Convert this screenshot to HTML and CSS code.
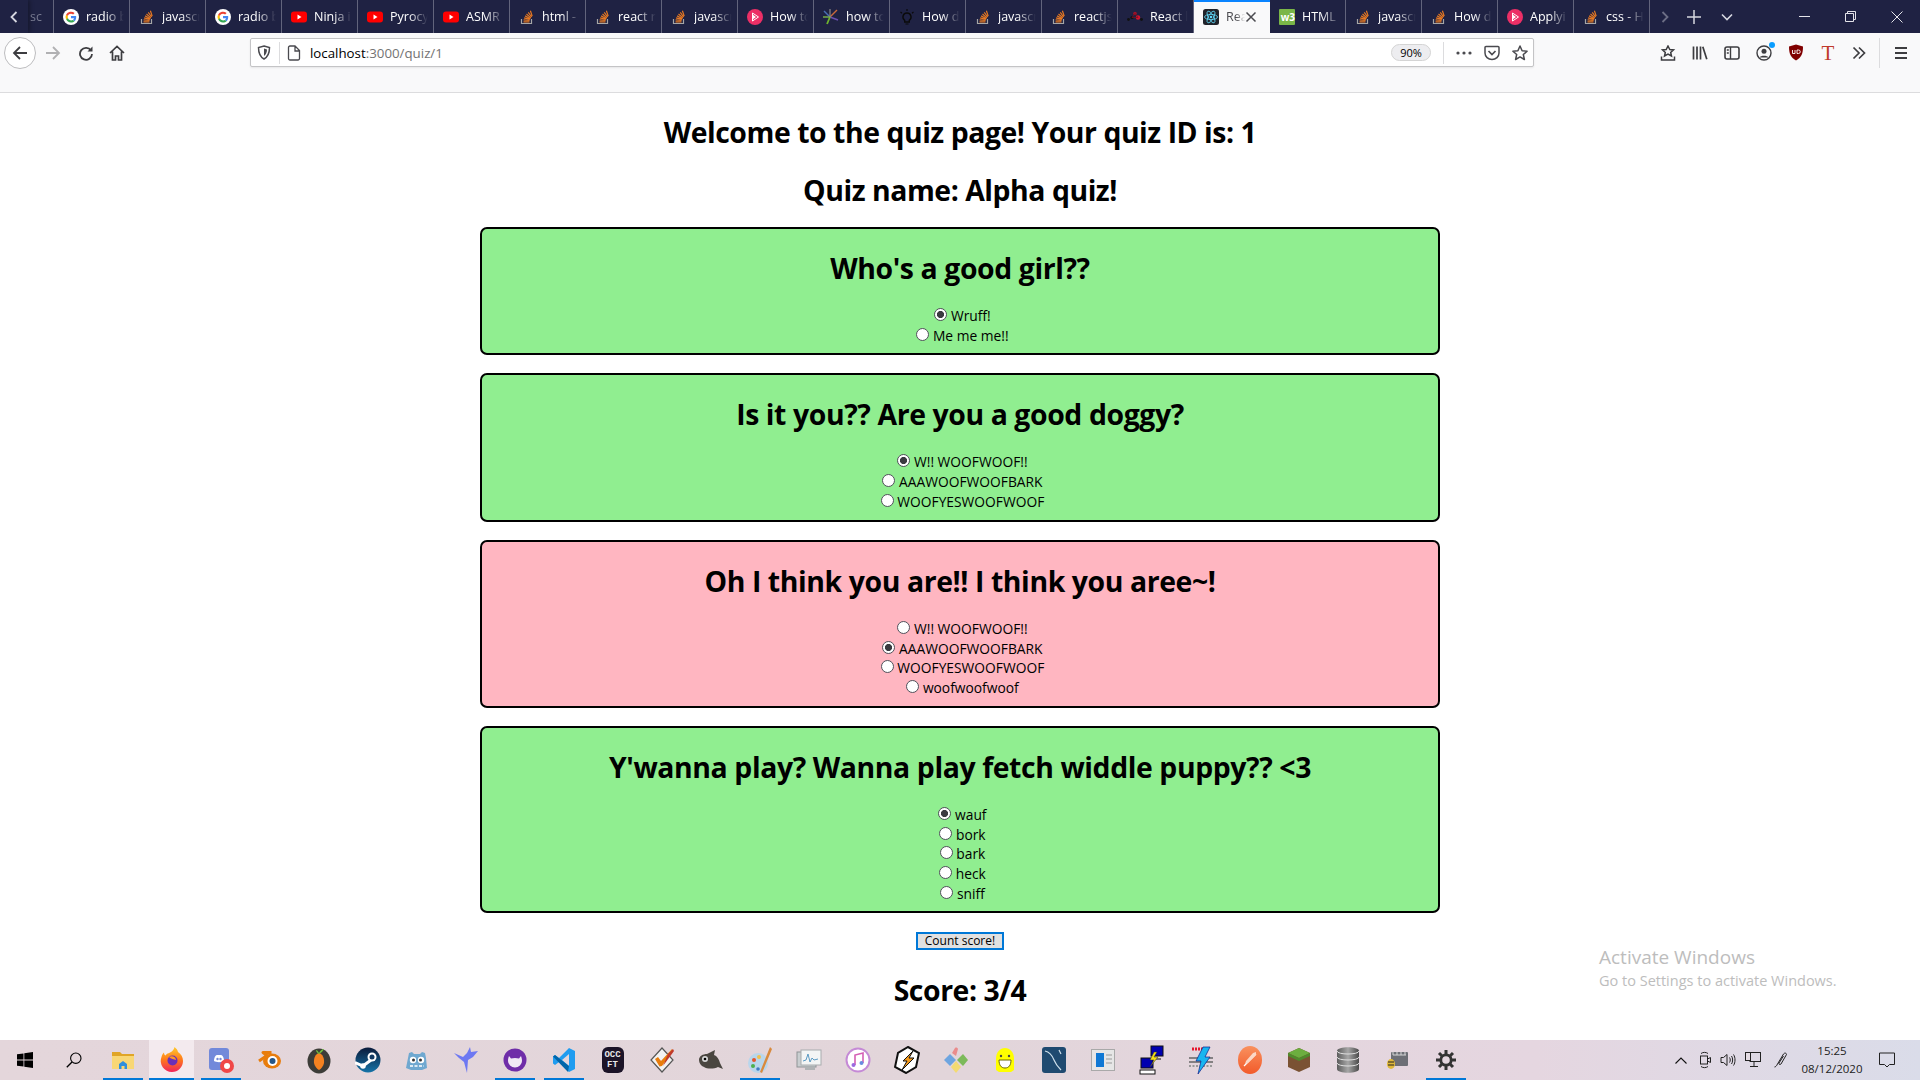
FILE: index.html
```html
<!DOCTYPE html>
<html lang="en">
<head>
<meta charset="UTF-8">
<title>React App</title>
<link rel="stylesheet" href="styles.css">
</head>
<body>

<!-- icon sheet -->
<svg class="icon-sheet" xmlns="http://www.w3.org/2000/svg">
    <symbol id="fav-google" viewBox="0 0 16 16">
        <circle cx="8" cy="8" r="8" fill="#fff"/>
        <path d="M13.2 8.2c0-.4 0-.8-.1-1.2H8v2.2h3a2.6 2.6 0 0 1-1.1 1.7l1.7 1.3c1-.9 1.6-2.3 1.6-4z" fill="#4285f4"/>
        <path d="M8 13.5c1.5 0 2.7-.5 3.6-1.3l-1.7-1.3c-.5.3-1.1.5-1.9.5-1.4 0-2.7-1-3.1-2.3L3.1 10A5.5 5.5 0 0 0 8 13.5z" fill="#34a853"/>
        <path d="M4.900 9.100a3.300 3.300 0 0 1 0-2.200L3.100 5.600a5.500 5.500 0 0 0 0 4.800z" fill="#fbbc05"/>
        <path d="M8 4.700c.8 0 1.500.3 2.100.8l1.500-1.500A5.500 5.500 0 0 0 3.100 5.600l1.800 1.300C5.300 5.600 6.600 4.700 8 4.700z" fill="#ea4335"/>
    </symbol>
    <symbol id="fav-so" viewBox="0 0 16 16">
        <path d="M2.500 10v4.500h10V10" fill="none" stroke="#a6a6a6" stroke-width="1.200"/>
        <path d="M4.500 12.800h6M4.600 10.900l6 .6M5.100 8.900l5.800 1.500M6.100 6.900l5.300 2.800M7.500 5l4.400 3.900M9.300 3.300l3.300 4.700M11.400 1.800l1.800 5.300" fill="none" stroke="#e87922" stroke-width="1.200"/>
    </symbol>
    <symbol id="fav-yt" viewBox="0 0 16 16">
        <rect x="0" y="2.500" width="16" height="11" rx="3" fill="#f00"/>
        <path d="M6.500 5.500v5l4-2.500z" fill="#fff"/>
    </symbol>
    <symbol id="fav-pink" viewBox="0 0 16 16">
        <circle cx="8" cy="8" r="8" fill="#ec2f66"/>
        <path d="M5.500 4v8l6-4z" fill="none" stroke="#fff" stroke-width="1"/>
        <path d="M5.500 5.500v5l3.500-2.500z" fill="#fff"/>
    </symbol>
    <symbol id="fav-spark" viewBox="0 0 16 16">
        <path d="M7 8L1 2" stroke="#4a6fb5" stroke-width="1.400"/>
        <path d="M7 8l7-7" stroke="#c9693a" stroke-width="1.400"/>
        <path d="M7 8l8 3" stroke="#6a4fb0" stroke-width="1.400"/>
        <path d="M7 8l-3 7" stroke="#6fb52e" stroke-width="1.800"/>
        <path d="M7 8H0" stroke="#7ab648" stroke-width="1.400"/>
        <path d="M7 8V0" stroke="#888" stroke-width="1.200"/>
    </symbol>
    <symbol id="fav-bulb" viewBox="0 0 16 16">
        <path d="M8 4a4 4 0 0 0-2.300 7.300V13h4.600v-1.700A4 4 0 0 0 8 4z" fill="none" stroke="#0b0b0b" stroke-width="1.400"/>
        <path d="M6.500 15h3M8 0v2M1.500 3l1.500 1.300M14.500 3L13 4.300" stroke="#0b0b0b" stroke-width="1.200"/>
    </symbol>
    <symbol id="fav-dots" viewBox="0 0 16 16">
        <circle cx="8" cy="4.500" r="1.800" fill="#a3122a"/>
        <circle cx="11" cy="8.500" r="2.200" fill="#d4122e"/>
        <circle cx="5" cy="8.500" r="1.600" fill="#111"/>
        <circle cx="1.500" cy="10.500" r="1.400" fill="#111"/>
        <circle cx="14.500" cy="10.500" r="1.400" fill="#111"/>
        <path d="M8 4.500l3 4M8 4.500l-3 4M5 8.500h6" stroke="#7a1020" stroke-width=".8"/>
    </symbol>
    <symbol id="fav-react" viewBox="0 0 16 16">
        <rect width="16" height="16" rx="2.500" fill="#20232a"/>
        <g fill="none" stroke="#61dafb" stroke-width=".8">
            <ellipse cx="8" cy="8" rx="6.500" ry="2.600"/>
            <ellipse cx="8" cy="8" rx="6.500" ry="2.600" transform="rotate(60 8 8)"/>
            <ellipse cx="8" cy="8" rx="6.500" ry="2.600" transform="rotate(120 8 8)"/>
        </g>
        <circle cx="8" cy="8" r="1.300" fill="#61dafb"/>
    </symbol>
</svg>

<!-- tab strip -->
<header class="tabstrip">
    <span class="tab-scroll">
        <svg width="10" height="14" viewBox="0 0 10 14"><path d="M7.500 2L2.500 7l5 5" fill="none" stroke="#d6d7e0" stroke-width="1.800"/></svg>
    </span>
    <div class="tab tab-cut"><span class="tab-label">sc</span></div>
    <div class="tab"><svg class="fav"><use href="#fav-google"/></svg><span class="tab-label">radio b</span></div>
    <div class="tab"><svg class="fav"><use href="#fav-so"/></svg><span class="tab-label">javascr</span></div>
    <div class="tab"><svg class="fav"><use href="#fav-google"/></svg><span class="tab-label">radio b</span></div>
    <div class="tab"><svg class="fav"><use href="#fav-yt"/></svg><span class="tab-label">Ninja i</span></div>
    <div class="tab"><svg class="fav"><use href="#fav-yt"/></svg><span class="tab-label">Pyrocy</span></div>
    <div class="tab"><svg class="fav"><use href="#fav-yt"/></svg><span class="tab-label">ASMR</span></div>
    <div class="tab"><svg class="fav"><use href="#fav-so"/></svg><span class="tab-label">html -</span></div>
    <div class="tab"><svg class="fav"><use href="#fav-so"/></svg><span class="tab-label">react r</span></div>
    <div class="tab"><svg class="fav"><use href="#fav-so"/></svg><span class="tab-label">javascr</span></div>
    <div class="tab"><svg class="fav"><use href="#fav-pink"/></svg><span class="tab-label">How to</span></div>
    <div class="tab"><svg class="fav"><use href="#fav-spark"/></svg><span class="tab-label">how to</span></div>
    <div class="tab"><svg class="fav"><use href="#fav-bulb"/></svg><span class="tab-label">How d</span></div>
    <div class="tab"><svg class="fav"><use href="#fav-so"/></svg><span class="tab-label">javascr</span></div>
    <div class="tab"><svg class="fav"><use href="#fav-so"/></svg><span class="tab-label">reactjs</span></div>
    <div class="tab"><svg class="fav"><use href="#fav-dots"/></svg><span class="tab-label">React l</span></div>
    <div class="tab tab-active">
        <svg class="fav"><use href="#fav-react"/></svg><span class="tab-label">Rea</span>
        <svg class="tab-close" width="12" height="12" viewBox="0 0 12 12"><path d="M1.500 1.500l9 9M10.500 1.500l-9 9" stroke="#4a4a4f" stroke-width="1.500"/></svg>
    </div>
    <div class="tab"><span class="fav fav-w3">w3</span><span class="tab-label">HTML</span></div>
    <div class="tab"><svg class="fav"><use href="#fav-so"/></svg><span class="tab-label">javascr</span></div>
    <div class="tab"><svg class="fav"><use href="#fav-so"/></svg><span class="tab-label">How d</span></div>
    <div class="tab"><svg class="fav"><use href="#fav-pink"/></svg><span class="tab-label">Applyi</span></div>
    <div class="tab"><svg class="fav"><use href="#fav-so"/></svg><span class="tab-label">css - H</span></div>
    <div class="strip-btns">
        <svg width="10" height="14" viewBox="0 0 10 14"><path d="M2.500 2l5 5-5 5" fill="none" stroke="#6c6e85" stroke-width="1.800"/></svg>
        <svg width="14" height="14" viewBox="0 0 14 14"><path d="M7 0v14M0 7h14" stroke="#d6d7e0" stroke-width="1.500"/></svg>
        <svg width="12" height="8" viewBox="0 0 12 8"><path d="M1 1.500l5 5 5-5" fill="none" stroke="#d6d7e0" stroke-width="1.600"/></svg>
    </div>
    <div class="win-btns">
        <svg width="11" height="11" viewBox="0 0 11 11"><path d="M0 5.500h11" stroke="#e4e4ea"/></svg>
        <svg width="11" height="11" viewBox="0 0 11 11"><path d="M.5 2.500h8v8h-8zM2.500 2.500v-2h8v8h-2" fill="none" stroke="#e4e4ea"/></svg>
        <svg width="12" height="12" viewBox="0 0 12 12"><path d="M.5.500l11 11M11.500.500l-11 11" stroke="#e4e4ea"/></svg>
    </div>
</header>

<!-- toolbar -->
<nav class="toolbar">
    <span class="back-btn">
        <svg width="16" height="16" viewBox="0 0 16 16"><path d="M15 8H2M8 2L2 8l6 6" fill="none" stroke="#3d3d40" stroke-width="1.800"/></svg>
    </span>
    <svg class="tool tool-fwd" width="16" height="16" viewBox="0 0 16 16"><path d="M1 8h13M8 2l6 6-6 6" fill="none" stroke="#b1b1b3" stroke-width="1.800"/></svg>
    <svg class="tool tool-reload" width="16" height="16" viewBox="0 0 16 16"><path d="M13 5.500A6 6 0 1 0 14 9" fill="none" stroke="#3d3d40" stroke-width="1.800"/><path d="M14.500 1.500v5h-5z" fill="#3d3d40"/></svg>
    <svg class="tool tool-home" width="16" height="16" viewBox="0 0 16 16"><path d="M1 8l7-6.500L15 8M3.500 6.500V15h3v-4h3v4h3V6.500" fill="none" stroke="#3d3d40" stroke-width="1.700"/></svg>

    <div class="urlbar">
        <svg class="url-shield" width="14" height="15" viewBox="0 0 14 15"><path d="M7 1l5.500 1.500c0 5-1 9-5.500 11.500C2.500 11.500 1.500 7.500 1.500 2.500z" fill="none" stroke="#4a4a4f" stroke-width="1.500"/><path d="M7 3.500v7.500c2-1.500 3-3.500 3-6.500z" fill="#4a4a4f"/></svg>
        <span class="url-sep"></span>
        <svg class="url-page" width="14" height="16" viewBox="0 0 14 16"><path d="M1.500 2.500a1.500 1.500 0 0 1 1.500-1.500h5l4.500 4.500v8a1.500 1.500 0 0 1-1.500 1.500H3a1.500 1.500 0 0 1-1.500-1.500zM8 1v5h4.500" fill="none" stroke="#4a4a4f" stroke-width="1.300"/></svg>
        <span class="url-text">localhost<span class="url-dim">:3000/quiz/1</span></span>
        <span class="url-zoom">90%</span>
        <span class="url-sep url-sep-right"></span>
        <svg class="url-more" width="16" height="4" viewBox="0 0 16 4"><circle cx="2" cy="2" r="1.600" fill="#4a4a4f"/><circle cx="8" cy="2" r="1.600" fill="#4a4a4f"/><circle cx="14" cy="2" r="1.600" fill="#4a4a4f"/></svg>
        <svg width="16" height="16" viewBox="0 0 16 16"><path d="M1 2.500a1 1 0 0 1 1-1h12a1 1 0 0 1 1 1V8a7 6.500 0 0 1-14 0z" fill="none" stroke="#4a4a4f" stroke-width="1.500"/><path d="M4.500 6L8 9.500 11.500 6" fill="none" stroke="#4a4a4f" stroke-width="1.700"/></svg>
        <svg width="16" height="16" viewBox="0 0 16 16"><path d="M8 1l2.100 4.700 5 .5-3.800 3.300 1.100 5L8 11.900l-4.400 2.600 1.100-5L.9 6.200l5-.5z" fill="none" stroke="#4a4a4f" stroke-width="1.500" stroke-linejoin="round"/></svg>
    </div>

    <div class="tool-right">
        <svg width="16" height="16" viewBox="0 0 16 16"><path d="M8 1l1.800 3.500 3.700.4-2.800 2.500.8 3.600L8 9.200l-3.500 1.800.8-3.600-2.800-2.500 3.700-.4z" fill="none" stroke="#3d3d40" stroke-width="1.500"/><path d="M1.500 11.500v3.500h13v-3.500" fill="none" stroke="#3d3d40" stroke-width="1.500"/></svg>
        <svg width="16" height="16" viewBox="0 0 16 16"><path d="M1.500 1.500v13M5 1.500v13M8.500 1.500v13M10.800 1.800l4 12.500" stroke="#3d3d40" stroke-width="1.700"/></svg>
        <svg width="16" height="16" viewBox="0 0 16 16"><rect x="1" y="2" width="14" height="12" rx="2" fill="none" stroke="#3d3d40" stroke-width="1.600"/><path d="M6.500 2v12M2.800 5h2M2.800 8h2" stroke="#3d3d40" stroke-width="1.400"/></svg>
        <span class="acct">
            <svg width="16" height="16" viewBox="0 0 16 16"><circle cx="8" cy="8" r="7" fill="none" stroke="#3d3d40" stroke-width="1.400"/><circle cx="8" cy="6.300" r="2.500" fill="#3d3d40"/><path d="M3.500 12.500c1-2.500 8-2.500 9 0" fill="#3d3d40"/></svg>
            <span class="acct-dot"></span>
        </span>
        <svg width="16" height="17" viewBox="0 0 16 17"><path d="M8 .5l7 2c0 7-1.500 11-7 14-5.500-3-7-7-7-14z" fill="#800000"/><path d="M4.500 6v3.500h2.500V6M9 6v3.500h1.500a1.700 1.700 0 0 0 0-3.500z" fill="none" stroke="#fff" stroke-width=".9"/></svg>
        <span class="ext-t">T</span>
        <svg width="14" height="14" viewBox="0 0 14 14"><path d="M1.500 1.500L7 7l-5.500 5.500M7 1.500L12.500 7 7 12.500" fill="none" stroke="#3d3d40" stroke-width="1.700"/></svg>
        <span class="tool-sep"></span>
        <svg width="14" height="14" viewBox="0 0 14 14"><path d="M1 2h12M1 7h12M1 12h12" stroke="#3d3d40" stroke-width="1.800"/></svg>
    </div>
</nav>

<!-- the quiz page itself -->
<main class="quiz-page">
    <h1>Welcome to the quiz page! Your quiz ID is: 1</h1>
    <h1>Quiz name: Alpha quiz!</h1>

    <section class="question certa">
        <h2>Who's a good girl??</h2>
        <label class="opcao"><input type="radio" name="q1" checked> Wruff!</label>
        <label class="opcao"><input type="radio" name="q1"> Me me me!!</label>
    </section>

    <section class="question certa">
        <h2>Is it you?? Are you a good doggy?</h2>
        <label class="opcao"><input type="radio" name="q2" checked> W!! WOOFWOOF!!</label>
        <label class="opcao"><input type="radio" name="q2"> AAAWOOFWOOFBARK</label>
        <label class="opcao"><input type="radio" name="q2"> WOOFYESWOOFWOOF</label>
    </section>

    <section class="question errada">
        <h2>Oh I think you are!! I think you aree~!</h2>
        <label class="opcao"><input type="radio" name="q3"> W!! WOOFWOOF!!</label>
        <label class="opcao"><input type="radio" name="q3" checked> AAAWOOFWOOFBARK</label>
        <label class="opcao"><input type="radio" name="q3"> WOOFYESWOOFWOOF</label>
        <label class="opcao"><input type="radio" name="q3"> woofwoofwoof</label>
    </section>

    <section class="question certa">
        <h2>Y'wanna play? Wanna play fetch widdle puppy?? &lt;3</h2>
        <label class="opcao"><input type="radio" name="q4" checked> wauf</label>
        <label class="opcao"><input type="radio" name="q4"> bork</label>
        <label class="opcao"><input type="radio" name="q4"> bark</label>
        <label class="opcao"><input type="radio" name="q4"> heck</label>
        <label class="opcao"><input type="radio" name="q4"> sniff</label>
    </section>

    <button type="button" class="count-btn">Count score!</button>
    <h1 class="score">Score: 3/4</h1>

    <div class="activate">
        <div class="activate-title">Activate Windows</div>
        <div>Go to Settings to activate Windows.</div>
    </div>
</main>

<!-- windows taskbar -->
<footer class="taskbar">
    <span class="task">
        <svg width="16" height="16" viewBox="0 0 16 16"><path d="M0 2.300l6.500-.9v6.200H0zM7.300 1.300L16 0v7.600H7.300zM0 8.400h6.500v6.200L0 13.700zM7.300 8.400H16V16l-8.700-1.200z" fill="#000"/></svg>
    </span>
    <span class="task">
        <svg width="16" height="16" viewBox="0 0 16 16"><circle cx="9.800" cy="6.200" r="5.200" fill="none" stroke="#000" stroke-width="1.100"/><path d="M6 10L.8 15.300" stroke="#000" stroke-width="1.300"/></svg>
    </span>
    <span class="task task-on">
        <svg width="24" height="24" viewBox="0 0 24 24"><path d="M1 4h8l2 2h12v5H1z" fill="#e0a526"/><path d="M1 8h22v13H1z" fill="#f8d775"/><path d="M8 21v-5l4-3 4 3v5h-2.500v-3h-3v3z" fill="#2f8fdc"/></svg>
    </span>
    <span class="task task-on task-active">
        <svg width="24" height="26" viewBox="0 0 24 26"><defs><linearGradient id="ff" x1="0" y1="0" x2="0" y2="1"><stop offset="0" stop-color="#ffcb2e"/><stop offset=".5" stop-color="#ff7a1a"/><stop offset="1" stop-color="#f0245a"/></linearGradient></defs><path d="M12 25A11 11 0 0 1 1.500 10c.5-2 1.500-4 2.500-4.500 0 1.500.5 2.500 1.500 3C7 6 10 6 11 5c1.500-1 3-2.500 3.500-5 2 1.500 3 3 3.500 5 3 2 5 5 5 9a11 11 0 0 1-11 11z" fill="url(#ff)"/><circle cx="12.500" cy="13.500" r="5" fill="#6b2fb8"/><path d="M9 10c3-2 7 0 7 3-2-1-5-1-7-3z" fill="#ff9a1f"/></svg>
    </span>
    <span class="task task-divider task-on">
        <svg width="28" height="28" viewBox="0 0 28 28"><rect x="2" y="2" width="20" height="22" rx="3" fill="#7289da"/><path d="M7 15c0-4 2-6 3-6h4c1 0 3 2 3 6-2 1.500-8 1.500-10 0z" fill="#fff"/><circle cx="10.500" cy="13" r="1.200" fill="#7289da"/><circle cx="13.500" cy="13" r="1.200" fill="#7289da"/><circle cx="20" cy="20" r="7" fill="#f04747"/><circle cx="20" cy="20" r="3" fill="#fff"/></svg>
    </span>
    <span class="task">
        <svg width="24" height="24" viewBox="0 0 24 24"><path d="M1 13l8-5.500L5 4.500h8.500" fill="none" stroke="#e87d0d" stroke-width="3" stroke-linejoin="round"/><ellipse cx="14" cy="13" rx="9" ry="7.500" fill="#e87d0d"/><circle cx="14.500" cy="13" r="5" fill="#fff"/><circle cx="14.500" cy="13" r="3" fill="#265787"/></svg>
    </span>
    <span class="task">
        <svg width="24" height="28" viewBox="0 0 24 28"><ellipse cx="12" cy="15" rx="11.500" ry="12.500" fill="#3c3c38"/><path d="M12 7c4 1 5.500 6 5 10-.5 3-3 6-5 7-2-1-4.500-4-5-7-.5-4 1-9 5-10z" fill="#f58220"/><path d="M9 4c1 0 2 1 3 3 1-2 3-4 5-4-1 2-3 4-5 5-1-.5-3-2-3-4z" fill="#6fbf3f"/></svg>
    </span>
    <span class="task">
        <svg width="26" height="26" viewBox="0 0 26 26"><defs><linearGradient id="st" x1="0" y1="0" x2="0" y2="1"><stop offset="0" stop-color="#0a1a3a"/><stop offset="1" stop-color="#1574a8"/></linearGradient></defs><circle cx="13" cy="13" r="12.500" fill="url(#st)"/><path d="M0 15.500l8 3.500 8-6" fill="none" stroke="#fff" stroke-width="3"/><circle cx="17" cy="10" r="4.500" fill="#fff"/><circle cx="17" cy="10" r="2.500" fill="#123a63"/><circle cx="8" cy="19" r="2.800" fill="#fff"/></svg>
    </span>
    <span class="task">
        <svg width="24" height="24" viewBox="0 0 24 24"><path d="M3 10l1-5 3-1 2 2h6l2-2 3 1 1 5 1 10-5 2H6l-5-2z" fill="#6fa8d0"/><circle cx="8" cy="12" r="3.200" fill="#fff"/><circle cx="16" cy="12" r="3.200" fill="#fff"/><circle cx="8.500" cy="12" r="1.500" fill="#333"/><circle cx="15.500" cy="12" r="1.500" fill="#333"/><path d="M5 18h14" stroke="#fff" stroke-width="1.500" stroke-dasharray="3 1.500"/></svg>
    </span>
    <span class="task">
        <svg width="26" height="28" viewBox="0 0 26 28"><path d="M1 7l9 4 4-4 3-6 1 5 7-1-5 6-5 3-1 13-3-11-5-4z" fill="#6d78f2"/></svg>
    </span>
    <span class="task task-on">
        <svg width="24" height="24" viewBox="0 0 24 24"><circle cx="12" cy="12" r="11.500" fill="#6f2da8"/><path d="M6 8l2 2.500c2.500-.7 5.500-.7 8 0L18 8c.8 2 1 3.500 1 5a7 6.500 0 0 1-14 0c0-1.500.2-3 1-5z" fill="#f0e8f5"/></svg>
    </span>
    <span class="task task-on">
        <svg width="24" height="26" viewBox="0 0 24 26"><path d="M17 1l6 3v18l-6 3L7 15l-4 3-2-1.500V9.500L3 8l4 3z" fill="#1f9cf0"/><path d="M17 7L10 13l7 6z" fill="#e4d6db"/><path d="M1 9.500L3 8l14 11-1 6z" fill="#0065a9"/></svg>
    </span>
    <span class="task">
        <span class="occt">OCC<br>FT</span>
    </span>
    <span class="task">
        <svg width="26" height="28" viewBox="0 0 26 28"><path d="M13 2l11 12-11 12L2 14z" fill="#f2f2f2" stroke="#555" stroke-width="1.200"/><path d="M6 13l3-2 3 4L23 3l1 2-11 15-2.500.5z" fill="#e87d0d"/><path d="M19 8l5-5 1 2-11 15z" fill="#c0392b"/></svg>
    </span>
    <span class="task">
        <svg width="26" height="22" viewBox="0 0 26 22"><path d="M1 11c0-4 4-6 8-6l8-4-1 5c3 1 5 4 6 8l3 6-5-2c-4 2-11 2-14 0-3-1-5-4-5-7z" fill="#4a4640"/><circle cx="7" cy="10" r="3" fill="#d8d8d8"/><circle cx="7" cy="10" r="1.300" fill="#000"/></svg>
    </span>
    <span class="task task-on">
        <svg width="26" height="28" viewBox="0 0 26 28"><ellipse cx="11" cy="17" rx="10" ry="10" fill="#b9d6ec"/><circle cx="7" cy="14" r="2" fill="#e4572e"/><circle cx="12" cy="11" r="2" fill="#f2c14e"/><circle cx="6" cy="20" r="2" fill="#4caf50"/><circle cx="11" cy="23" r="1.800" fill="#3f7cc4"/><path d="M23 1l2 2-10 24-2-1z" fill="#d98a3d"/></svg>
    </span>
    <span class="task">
        <svg width="26" height="24" viewBox="0 0 26 24"><rect x="1" y="4" width="19" height="15" fill="#c9ced0" stroke="#8f9496"/><rect x="5" y="2" width="20" height="15" fill="#f3f5f5" stroke="#a8acae"/><path d="M7 13l3-1 2-6 2 8 2-4 2 2 4-1" fill="none" stroke="#5b9bc4"/><path d="M9 19h10v3H9z" fill="#b0b3b5"/></svg>
    </span>
    <span class="task">
        <svg width="26" height="26" viewBox="0 0 26 26"><circle cx="13" cy="13" r="11.500" fill="#fff" stroke="#c58ad6" stroke-width="2"/><path d="M10 18V8l8-2v10" fill="none" stroke="#d45fb5" stroke-width="1.600"/><circle cx="8.500" cy="18" r="2" fill="#9a6ae0"/><circle cx="16.500" cy="16" r="2" fill="#6a8de0"/></svg>
    </span>
    <span class="task">
        <svg width="26" height="28" viewBox="0 0 26 28"><path d="M14 1l11 6-3 14-10 6L1 21 4 7z" fill="#fff" stroke="#111" stroke-width="2"/><path d="M19 5L9 15h4l-5 9 12-12h-5z" fill="#f39a1d" stroke="#111"/></svg>
    </span>
    <span class="task">
        <svg width="26" height="28" viewBox="0 0 26 28"><path d="M1 14l6-6 6 6-6 6z" fill="#6ea5e0"/><path d="M14 14l6-6 5 6-5 6z" fill="#7cba5a"/><path d="M8 21l5-6 5 6-5 6z" fill="#f3db72"/><path d="M9 7l3-5c1-1 3 0 3 1l-2 7z" fill="#ea8c8c"/></svg>
    </span>
    <span class="task">
        <svg width="24" height="28" viewBox="0 0 24 28"><path d="M3 13c0-7 4-11 9-11s9 4 9 11v11l-3 2H6l-3-2z" fill="#ffff00"/><path d="M6 14h12c0 5-2 8-6 8s-6-3-6-8z" fill="#fff" stroke="#6a6a00"/><circle cx="8" cy="10" r="1.200" fill="#444"/><circle cx="16" cy="10" r="1.200" fill="#444"/></svg>
    </span>
    <span class="task">
        <svg width="24" height="28" viewBox="0 0 24 28"><rect y="1" width="24" height="26" rx="3" fill="#1f4a70"/><path d="M3 5c5 1 7 4 9 9s4 7 7 10M17 4l2 4" fill="none" stroke="#cfe0ec" stroke-width="1.200"/></svg>
    </span>
    <span class="task">
        <svg width="24" height="22" viewBox="0 0 24 22"><rect x=".5" y=".5" width="23" height="21" fill="#e6e6e6" stroke="#a9a9a9"/><rect x="5" y="4" width="8" height="14" fill="#0f78d4"/><path d="M15 6h6M15 10h6M15 14h6" stroke="#9a9a9a" stroke-width="1.200"/></svg>
    </span>
    <span class="task">
        <svg width="26" height="30" viewBox="0 0 26 30"><rect x="12" y="1" width="12" height="10" fill="#0000b0" stroke="#111"/><path d="M14 11v3h8" fill="none" stroke="#111"/><rect x="2" y="13" width="12" height="10" fill="#0000b0" stroke="#111"/><rect x="1" y="25" width="15" height="4" fill="#fff" stroke="#111"/><path d="M15 7l-4 8h4l-4 7 8-10h-4l3-5z" fill="#f5e014" stroke="#333" stroke-width=".5"/></svg>
    </span>
    <span class="task">
        <svg width="26" height="30" viewBox="0 0 26 30"><path d="M1 13h24M1 17h24" stroke="#666" stroke-width="1.500"/><path d="M1 21h24" stroke="#999" stroke-dasharray="2 1.500" stroke-width="2"/><path d="M4 4h14" stroke="#e6162d" stroke-width="3" stroke-dasharray="2 1"/><path d="M15 2h7l-5 10h5L10 29l3-13H8z" fill="#18b5f0" stroke="#0a1e8c" stroke-width=".7"/></svg>
    </span>
    <span class="task">
        <svg width="24" height="28" viewBox="0 0 24 28"><defs><linearGradient id="or" x1="0" y1="0" x2="0" y2="1"><stop offset="0" stop-color="#f9915e"/><stop offset="1" stop-color="#f25a2a"/></linearGradient></defs><ellipse cx="12" cy="14" rx="12" ry="14" fill="url(#or)"/><path d="M6 20L18 8" stroke="#fff" stroke-width="1.200"/><path d="M15 7l3-1 0 3-8 8-3 1 1-3z" fill="#fbd8c6"/></svg>
    </span>
    <span class="task">
        <svg width="24" height="26" viewBox="0 0 24 26"><path d="M12 1l11 5v14l-11 5L1 20V6z" fill="#7a5233"/><path d="M12 1l11 5-11 5L1 6z" fill="#6cae3f"/><path d="M1 6l11 5v3L1 9zM23 6L12 11v3l11-5z" fill="#4f8a2c"/></svg>
    </span>
    <span class="task">
        <svg width="24" height="28" viewBox="0 0 24 28"><defs><linearGradient id="db" x1="0" y1="0" x2="1" y2="0"><stop offset="0" stop-color="#5c5c5c"/><stop offset=".5" stop-color="#a6a6a6"/><stop offset="1" stop-color="#4a4a4a"/></linearGradient></defs><path d="M1 5c0-5 22-5 22 0v18c0 5-22 5-22 0z" fill="url(#db)"/><path d="M1 5c0 4 22 4 22 0M1 11c0 4 22 4 22 0M1 17c0 4 22 4 22 0" fill="none" stroke="#e0e0e0"/></svg>
    </span>
    <span class="task">
        <svg width="22" height="20" viewBox="0 0 22 20"><rect x="5" y="2" width="17" height="14" rx="1" fill="#6d6f76"/><path d="M7 5h13M7 2v3M11 2v3M15 2v3M19 2v3" stroke="#d6d6d6"/><ellipse cx="5" cy="14" rx="4" ry="5" fill="#e0b93a"/><path d="M2 12h6M2 15h6" stroke="#222" stroke-width="1.200"/></svg>
    </span>
    <span class="task task-on">
        <svg width="20" height="20" viewBox="0 0 20 20"><circle cx="10" cy="10" r="5.200" fill="none" stroke="#333" stroke-width="2.800"/><path d="M10 0v4M10 16v4M0 10h4M16 10h4M3 3l2.800 2.800M14.200 14.200L17 17M17 3l-2.800 2.800M5.800 14.200L3 17" stroke="#333" stroke-width="3"/></svg>
    </span>

    <div class="tray">
        <svg class="tray-up" width="12" height="7" viewBox="0 0 12 7"><path d="M.5 6.500L6 1l5.500 5.500" fill="none" stroke="#111" stroke-width="1.100"/></svg>
        <svg width="12" height="18" viewBox="0 0 12 18"><rect x="1.500" y="5" width="7" height="8" fill="none" stroke="#222"/><path d="M8.500 8l3-1.500v5l-3-1.500M2 2.500c2-1.500 5-1.500 7 0M2 15.500c2 1.500 5 1.500 7 0" fill="none" stroke="#222"/></svg>
        <svg width="16" height="16" viewBox="0 0 16 16"><path d="M1 5.500h2.500L7 2.500v11l-3.500-3H1zM9.500 5.500c1 1.500 1 3.500 0 5M11.500 4c1.500 2 1.500 6 0 8M13.500 2.500c2 3 2 8 0 11" fill="none" stroke="#222"/></svg>
        <svg width="16" height="16" viewBox="0 0 16 16"><rect x="5" y=".5" width="10.500" height="9" fill="none" stroke="#222"/><rect x=".5" y=".5" width="5" height="8" fill="#e4dbe3" stroke="#222"/><path d="M9 10v4M5 14.500h8" fill="none" stroke="#222"/></svg>
        <svg class="tray-pen" width="16" height="16" viewBox="0 0 16 16"><path d="M1.500 15c1 0 2-1 3-3l6-10c1-1.500 3-1 3 .5L8 12c-1 1-2.500.5-2-1l4.500-7" fill="none" stroke="#222"/></svg>
        <div class="clock">
            <div>15:25</div>
            <div>08/12/2020</div>
        </div>
        <svg class="tray-note" width="16" height="16" viewBox="0 0 16 16"><path d="M.5 1h15v11.500h-5L8 15l-2.500-2.500h-5z" fill="none" stroke="#222"/></svg>
    </div>
</footer>

</body>
</html>
```

FILE: styles.css
```css
html, body {
    margin: 0;
    height: 100%;
}
body {
    display: flex;
    flex-direction: column;
    height: 1080px;
    overflow: hidden;
    background-color: white;
    font-family: "Open Sans", "Noto Sans", sans-serif;
    color: black;
}
.icon-sheet {
    display: none;
}

/* tabs */
.tabstrip {
    display: flex;
    align-items: stretch;
    height: 33px;
    background-color: #1f2243;
    color: white;
    font-size: 12.500px;
}
.tab-scroll {
    display: flex;
    align-items: center;
    justify-content: center;
    width: 28px;
    box-shadow: 2px 0 4px rgba(0, 0, 0, .3);
}
.tab {
    display: flex;
    align-items: center;
    padding-left: 9px;
    width: 66px;
    border-right: 1px solid #62647c;
    overflow: hidden;
    white-space: nowrap;
}
.tab-cut {
    width: 23px;
    padding-left: 2px;
    color: #777a90;
}
.fav {
    flex: none;
    width: 16px;
    height: 16px;
    margin-right: 7px;
}
.fav-w3 {
    background-color: #7ab648;
    color: white;
    font-size: 10px;
    font-weight: bold;
    line-height: 16px;
    text-align: right;
    border-radius: 1px;
}
.tab-label {
    flex: 1;
    min-width: 0;
    overflow: hidden;
    -webkit-mask-image: linear-gradient(90deg, black 45%, transparent 88%);
    mask-image: linear-gradient(90deg, black 45%, transparent 88%);
}
.tab-active {
    background-color: #f9f9fa;
    box-shadow: inset 0 2px 0 #0a84ff;
    color: #4a4a4f;
    border-right: none;
    width: 67px;
}
.tab-active .tab-label {
    flex: none;
    width: 22px;
}
.tab-close {
    flex: none;
    margin: 0 13px 0 -3px;
}
.strip-btns {
    display: flex;
    align-items: center;
    gap: 17px;
    margin-left: 10px;
}
.strip-btns svg:last-child {
    margin-left: 3px;
}
.win-btns {
    display: flex;
    align-items: center;
    gap: 35px;
    margin-left: auto;
    margin-right: 17px;
}

/* address bar row */
.toolbar {
    display: flex;
    align-items: center;
    height: 60px;
    padding-bottom: 20px;
    box-sizing: border-box;
    background-color: #f9f9fa;
    border-bottom: 1px solid #dcdcde;
}
.back-btn {
    display: flex;
    align-items: center;
    justify-content: center;
    width: 32px;
    height: 32px;
    margin-left: 4px;
    border: 1px solid #bdbdbf;
    border-radius: 50%;
    background-color: white;
    box-sizing: border-box;
}
.tool-fwd {
    margin-left: 9px;
}
.tool-reload {
    margin-left: 17px;
}
.tool-home {
    margin-left: 15px;
}
.urlbar {
    display: flex;
    align-items: center;
    gap: 12px;
    width: 1284px;
    height: 29px;
    margin-left: 125px;
    padding: 0 5px 0 6px;
    box-sizing: border-box;
    background-color: white;
    border: 1px solid #c4c4c6;
    border-radius: 2px;
    box-shadow: 0 1px 2px rgba(0, 0, 0, .08);
    font-size: 14px;
}
.url-sep {
    width: 1px;
    height: 22px;
    margin-left: -4px;
    background-color: #dcdcde;
}
.url-page {
    margin-left: -5px;
}
.url-text {
    flex: 1;
    margin-left: -3px;
    font-size: 13.300px;
}
.url-dim {
    color: #737373;
}
.url-zoom {
    width: 38px;
    height: 15px;
    border: 1px solid #d4d4d4;
    border-radius: 9px;
    background-color: #ededf0;
    font-size: 11px;
    line-height: 15px;
    text-align: center;
    margin-right: -1px;
}
.url-sep-right {
    margin: 0 0 0 1px;
}
.tool-right {
    display: flex;
    align-items: center;
    gap: 16px;
    margin-left: 126px;
}
.acct {
    position: relative;
    display: flex;
}
.acct-dot {
    position: absolute;
    top: -3px;
    right: -3px;
    width: 6px;
    height: 6px;
    border-radius: 50%;
    background-color: #0a9dff;
}
.ext-t {
    width: 16px;
    color: #c0392b;
    font-family: "Liberation Serif", serif;
    font-size: 21px;
    line-height: 18px;
    text-align: center;
}
.tool-sep {
    width: 1px;
    height: 30px;
    margin: 0 -2px 0 -3px;
    background-color: #dcdcde;
}

/* quiz */
.quiz-page {
    position: relative;
    flex: 1;
    display: flex;
    flex-direction: column;
    align-items: center;
    min-height: 0;
}
h1 {
    margin: 20px 0 0;
    font-size: 28.400px;
    font-weight: bold;
    line-height: 38px;
    letter-spacing: -.45px;
    text-align: center;
}
.question {
    display: flex;
    flex-direction: column;
    align-items: center;
    width: 960px;
    margin-top: 18px;
    padding-bottom: 8px;
    box-sizing: border-box;
    border: 2px solid black;
    border-radius: 7px;
}
.certa {
    background-color: lightgreen;
}
.errada {
    margin-top: 18.500px;
    background-color: lightpink;
}
.question h2 {
    margin: 20px 0 19px;
    font-size: 28.400px;
    line-height: 38px;
    letter-spacing: -.4px;
}
.opcao {
    display: block;
    font-size: 13.800px;
    line-height: 19.700px;
}
.opcao input {
    appearance: none;
    width: 13px;
    height: 13px;
    margin: 0 0 0 5px;
    background-color: white;
    border: 1.200px solid #50505a;
    border-radius: 50%;
    box-sizing: border-box;
    vertical-align: 0;
}
.opcao input:checked {
    background: radial-gradient(circle, #3a3a40 0 3.200px, white 3.900px);
}
.count-btn {
    width: 88px;
    height: 18px;
    margin-top: 19px;
    padding: 0;
    background-color: #e1e1e1;
    border: 2px solid #0078d7;
    font-family: inherit;
    font-size: 12px;
    line-height: 14px;
    color: black;
    cursor: pointer;
}
.score {
    margin-top: 21px;
}
.activate {
    position: absolute;
    left: 1599px;
    top: 850px;
    color: #bdbdbd;
    font-size: 14.500px;
    line-height: 20px;
}
.activate-title {
    font-size: 19px;
    line-height: 28px;
}

/* taskbar */
.taskbar {
    display: flex;
    align-items: stretch;
    height: 40px;
    background: linear-gradient(90deg, #e4d6db 0%, #e2d5da 50%, #e5d6e0 80%, #dadce9 100%);
}
.task {
    display: flex;
    align-items: center;
    justify-content: center;
    width: 49px;
    flex: none;
    position: relative;
}
.task-on::after {
    content: "";
    position: absolute;
    left: 5px;
    right: 4px;
    bottom: 0;
    height: 2px;
    background-color: #0078d7;
}
.task-active {
    background-color: #f3eaee;
    width: 45px;
    margin: 0 2px;
}
.task-active::after {
    left: 0;
    right: 0;
}
.occt {
    display: block;
    width: 22px;
    height: 26px;
    padding-top: 3px;
    box-sizing: border-box;
    background-color: #1c1428;
    border-radius: 6px;
    color: #e8e8e8;
    font-family: "Liberation Mono", monospace;
    font-size: 9px;
    line-height: 10px;
    font-weight: bold;
    text-align: center;
}
.tray {
    display: flex;
    align-items: center;
    gap: 9px;
    margin-left: auto;
}
.tray-up {
    margin-right: 3px;
}
.tray-pen {
    margin-left: 3px;
}
.clock {
    width: 62px;
    margin: 0 0 0 3px;
    font-size: 11.500px;
    line-height: 18px;
    text-align: center;
    color: #222;
}
.tray-note {
    margin: 0 25px 0 7px;
}
```
